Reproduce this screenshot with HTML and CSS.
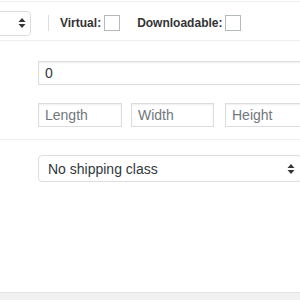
FILE: index.html
```html
<!DOCTYPE html>
<html lang="en">
<head>
    <meta charset="utf-8">
    <title>Product data</title>
    <link rel="stylesheet" href="styles.css">
</head>
<body>

<div class="panel">
    <div class="type-bar">
        <div class="type-select">
            <svg class="arrows" width="8" height="12" viewBox="0 0 8 12"><path d="M4 1 L7.5 5 H0.5 Z M4 11 L7.5 7 H0.5 Z" fill="#32373c"/></svg>
        </div>
        <span class="sep"></span>
        <label class="type-option">Virtual: <span class="check"></span></label>
        <label class="type-option">Downloadable: <span class="check"></span></label>
    </div>

    <div class="group">
        <div class="field">
            <input class="text wide" type="text" value="0">
        </div>
        <div class="field dims">
            <input class="text dim" type="text" placeholder="Length">
            <input class="text dim mid" type="text" placeholder="Width">
            <input class="text dim last" type="text" placeholder="Height">
        </div>
    </div>

    <div class="group shipping">
        <div class="field">
            <div class="select wide">
                <span>No shipping class</span>
                <svg class="arrows" width="8" height="12" viewBox="0 0 8 12"><path d="M4 1 L7.5 5 H0.5 Z M4 11 L7.5 7 H0.5 Z" fill="#32373c"/></svg>
            </div>
        </div>
    </div>
</div>

<div class="footer"></div>

</body>
</html>
```

FILE: styles.css
```css
html, body {
    margin: 0;
    padding: 0;
    background-color: #fff;
    font-family: "Liberation Sans", Arial, sans-serif;
    color: #32373c;
    overflow: hidden;
}

.panel {
    height: 290px;
    margin-top: 1px;
    border-top: 1px solid #eee;
    overflow: hidden;
}

.type-bar {
    height: 39px;
    border-bottom: 1px solid #eee;
    display: flex;
    align-items: center;
    padding-top: 4px;
    box-sizing: border-box;
}

.type-select {
    width: 40px;
    height: 25px;
    margin-left: -9px;
    border: 1px solid #ddd;
    border-radius: 4px;
    box-sizing: border-box;
    display: flex;
    align-items: center;
    justify-content: flex-end;
    padding-right: 4px;
}

.sep {
    width: 1px;
    height: 16px;
    background-color: #ddd;
    margin-left: 17px;
    margin-right: 11px;
}

.type-option {
    display: flex;
    align-items: center;
    font-size: 12px;
    font-weight: bold;
    color: #333;
    margin-right: 17px;
}

.check {
    display: inline-block;
    width: 14px;
    height: 14px;
    border: 1px solid #b4b9be;
    margin-left: 3px;
}

.group {
    height: 99px;
    border-bottom: 1px solid #eee;
    padding-left: 38px;
    padding-top: 20px;
    box-sizing: border-box;
}

.field {
    display: flex;
}

.dims {
    margin-top: 18px;
}

.text {
    font-family: "Liberation Sans", Arial, sans-serif;
    font-size: 14px;
    color: #32373c;
    height: 24px;
    border: 1px solid #ddd;
    box-shadow: inset 0 1px 2px rgba(0, 0, 0, .07);
    padding: 0 6px;
    margin: 0;
    box-sizing: border-box;
    outline: none;
}

.text::placeholder {
    color: #72777c;
}

.wide {
    width: 300px;
    flex-shrink: 0;
}

.dim {
    width: 84px;
    flex-shrink: 0;
}

.mid {
    margin-left: 9px;
    width: 83px;
}

.last {
    margin-left: 11px;
    width: 90px;
}

.shipping {
    border-bottom: 0;
    padding-top: 15px;
}

.select {
    height: 27px;
    width: 264px;
    border: 1px solid #ddd;
    border-radius: 4px;
    box-sizing: border-box;
    display: flex;
    align-items: center;
    justify-content: space-between;
    padding: 0 6px 0 9px;
    font-size: 14px;
    color: #32373c;
}

.footer {
    height: 8px;
    border-top: 1px solid #e5e5e5;
    background-color: #f1f1f1;
}
```
